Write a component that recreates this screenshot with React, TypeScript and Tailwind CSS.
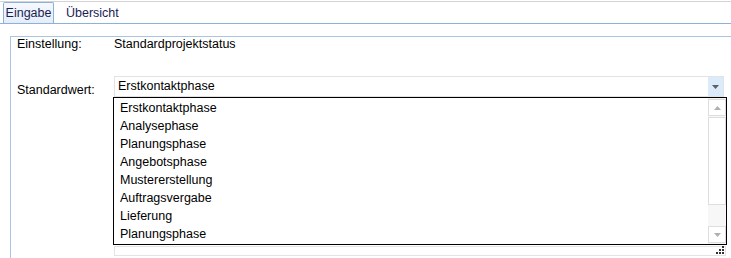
import React from 'react'

const phases = [
  'Erstkontaktphase',
  'Analysephase',
  'Planungsphase',
  'Angebotsphase',
  'Mustererstellung',
  'Auftragsvergabe',
  'Lieferung',
  'Planungsphase',
]

function Arrow({ up = false, color }: { up?: boolean; color: string }) {
  return (
    <svg width="7" height="4" viewBox="0 0 7 4" className={up ? 'rotate-180' : ''}>
      <path d="M0 0h7L3.5 4z" fill={color} />
    </svg>
  )
}

function Grip() {
  return (
    <svg width="8" height="8" viewBox="0 0 8 8">
      <rect x="6" y="0" width="2" height="2" fill="#333" />
      <rect x="3" y="3" width="2" height="2" fill="#333" />
      <rect x="6" y="3" width="2" height="2" fill="#333" />
      <rect x="0" y="6" width="2" height="2" fill="#333" />
      <rect x="3" y="6" width="2" height="2" fill="#333" />
      <rect x="6" y="6" width="2" height="2" fill="#333" />
    </svg>
  )
}

export default function App() {
  return (
    <div className="w-[731px] h-[258px] overflow-hidden bg-white font-['Liberation_Sans',Arial,sans-serif] text-[12.5px] text-black">
      <div className="h-px" />
      <div className="h-px bg-[#d4d4d4]" />

      {/* Tabs */}
      <div className="h-[22px] flex items-end pl-[3px] border-b border-[#8eb1da]">
        <div className="w-[51px] h-[21px] border border-b-0 border-[#8eb1da] rounded-t-[2px] bg-gradient-to-b from-[#f6f9fd] to-[#e3edf9] flex items-center justify-center text-[#1c1c55] leading-[14px]">
          Eingabe
        </div>
        <div className="h-[21px] pl-[11px] pr-[10px] ml-[1px] flex items-center text-[#1c1c55] leading-[14px]">
          Übersicht
        </div>
      </div>

      {/* Panel */}
      <div className="pl-[10px] pt-[12px]">
        <div className="h-[240px] border-l border-t border-[#a8c5e4]">
          <div className="flex pl-[6px] pt-0 leading-[14px]">
            <div className="w-[97px]">Einstellung:</div>
            <div>Standardprojektstatus</div>
          </div>

          <div className="flex pl-[6px] mt-[25px]">
            <div className="w-[97px] pt-[7px] leading-[14px]">Standardwert:</div>
            <div className="flex flex-col">
              <div className="relative w-[610px] h-[21px] border border-[#e3e3e3] flex">
                <div className="flex-1 pl-[3px] leading-[19px]">Erstkontaktphase</div>
                <div className="w-[15px] h-full bg-[#dcebfc] flex items-center justify-center">
                  <Arrow color="#606060" />
                </div>

                {/* Open dropdown list */}
                <div className="absolute left-[-2px] top-[20px] w-[614px] h-[148px] border border-black bg-white z-10">
                  <div className="pt-px">
                    {phases.map((p, i) => (
                      <div key={i} className="pl-[6px] h-[18px] leading-[18px]">
                        {p}
                      </div>
                    ))}
                  </div>
                  <div className="absolute right-0 top-0 bottom-0 w-[18px] bg-[#f7f7f7] flex flex-col">
                    <div className="mt-px h-[17px] border border-[#dedede] bg-white flex items-center justify-center">
                      <Arrow up color="#b0b0b0" />
                    </div>
                    <div className="mt-px h-[88px] border border-[#dedede] bg-white" />
                    <div className="flex-1" />
                    <div className="mb-px h-[17px] border border-[#dedede] bg-white flex items-center justify-center">
                      <Arrow color="#b0b0b0" />
                    </div>
                  </div>
                </div>
              </div>

              <div className="mt-[149px] w-[612px] h-[10px] border border-[#e3e3e3] flex justify-end items-end pr-px pb-px">
                <Grip />
              </div>
            </div>
          </div>
        </div>
      </div>
    </div>
  )
}
